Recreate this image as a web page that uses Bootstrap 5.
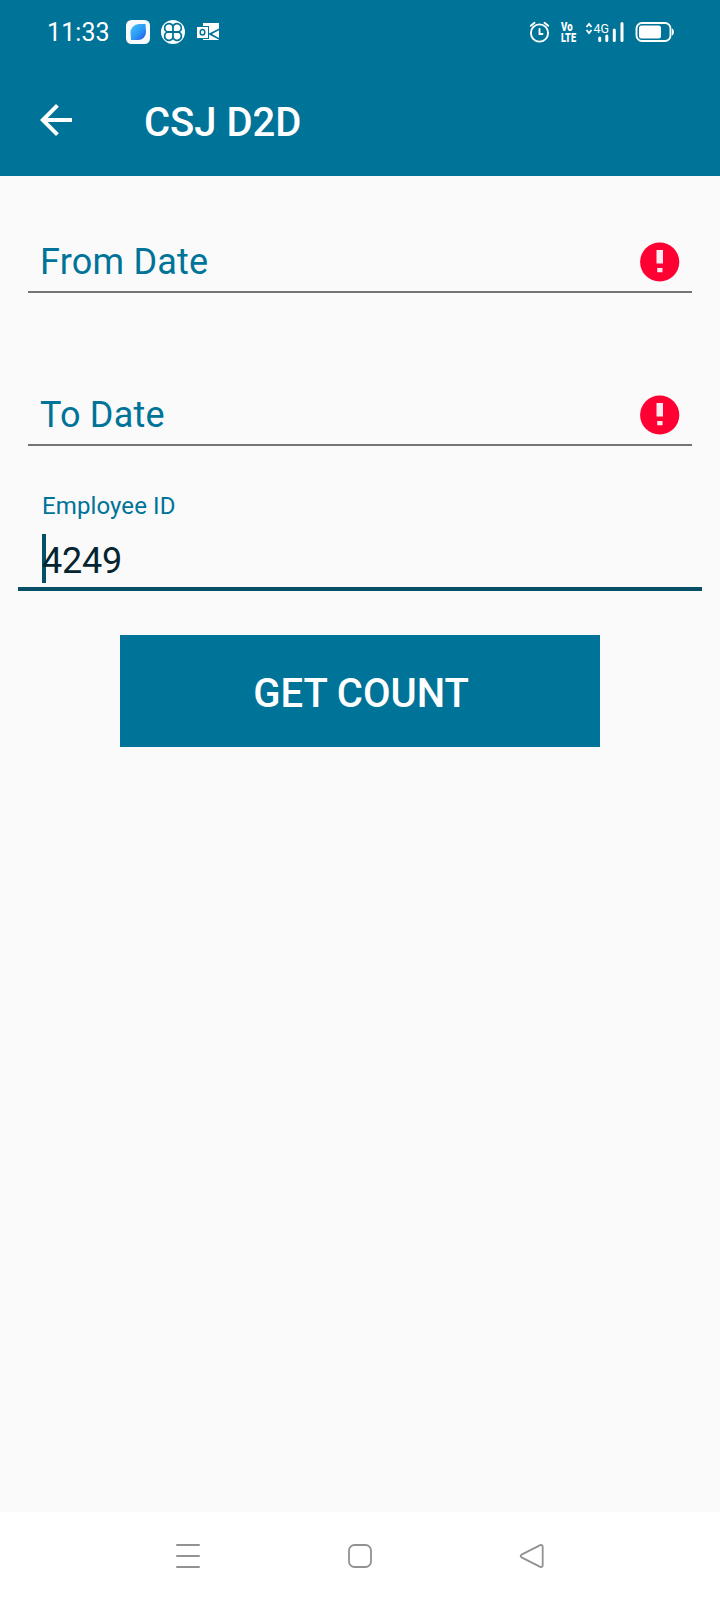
<!DOCTYPE html>
<html lang="en">
<head>
<meta charset="utf-8">
<meta name="viewport" content="width=device-width, initial-scale=1">
<title>CSJ D2D</title>
<link href="https://cdn.jsdelivr.net/npm/bootstrap@5.3.0/dist/css/bootstrap.min.css" rel="stylesheet">
<style>
  body { font-family: Roboto, "Liberation Sans", sans-serif; background: #fafafa; height: 1600px; overflow: hidden; }
  svg { display: block; flex: none; }
  .brand-bg { background: #007399; color: #fff; }
  .statusbar { height: 64px; padding: 0 45px 0 47px; }
  .clock { font-size: 25px; line-height: 28px; letter-spacing: .1px; width: 78px; padding-top: 1px; }
  .appbar { height: 112px; padding: 0 32px; gap: 64px; }
  .appbar h1 { font-size: 40px; line-height: 48px; font-weight: 500; padding-top: 5px; }
  .content { padding-top: 57px; }
  .date-field { height: 60px; margin: 0 28px; padding: 0 12px; border-bottom: 2px solid #757575; color: #007399; font-size: 36px; line-height: 58px; letter-spacing: .22px; }
  .date-field + .date-field { margin-top: 93px; }
  .employee { margin: 46px 18px 0; padding: 0 24px; border-bottom: 4px solid #055066; }
  .employee label { font-size: 24px; line-height: 28px; letter-spacing: .1px; color: #007399; }
  .entry { height: 53px; margin-top: 14px; font-size: 36px; line-height: 55px; letter-spacing: -.25px; color: #042530; }
  .caret { left: 0; top: 0; width: 4px; height: 49px; background: #055066; }
  .count-btn { width: 480px; height: 112px; margin-top: 44px; font-size: 40px; font-weight: 500; line-height: 48px; padding: 5px 0 0 2px; --bs-btn-color: #fff; --bs-btn-hover-color: #fff; }
  .count-btn:hover { background: #00668a; }
  .navkeys { height: 88px; padding: 0 175px; }
</style>
</head>
<body class="d-flex flex-column">
<header class="brand-bg">
  <div class="statusbar d-flex align-items-center justify-content-between">
    <div class="d-flex align-items-center">
      <span class="clock">11:33</span>
      <svg width="98" height="26" viewBox="125 19 98 26">
        <defs><linearGradient id="leaf" x1="0" y1="0" x2="1" y2="1"><stop offset="0" stop-color="#45c5f7"/><stop offset=".55" stop-color="#2a98f5"/><stop offset="1" stop-color="#2450e8"/></linearGradient></defs>
        <rect x="126" y="20" width="24" height="24" rx="5.500" fill="#f8fafc"/>
        <path d="M145.500 24l.5 8a7.800 7.800 0 0 1-8 8H131l-.5-7a8.500 8.500 0 0 1 8.500-9z" fill="url(#leaf)"/>
        <circle cx="173" cy="32" r="12" fill="#fff"/>
        <g transform="translate(173 32) scale(1.18) translate(-173 -32)"><path d="M173 32h-4.800a3.700 3.700 0 1 1 4.800-4.800zM173 32h4.800a3.700 3.700 0 1 0-4.800-4.800zM173 32h-4.800a3.700 3.700 0 1 0 4.800 4.800zM173 32h4.800a3.700 3.700 0 1 1-4.800 4.800z" fill="none" stroke="#007399" stroke-width="1.500"/></g>
        <path d="M203 23h16v17h-16z" fill="#fff"/>
        <path d="M208 34l11-5.500v1.700L212 34l7 4v1.700z" fill="#007399"/>
        <path d="M196.500 26h12.500v13h-12.500z" fill="#007399"/>
        <path d="M197 27h11v11h-11z" fill="#fff"/>
        <ellipse cx="202.500" cy="32.300" rx="2.300" ry="2.800" fill="none" stroke="#007399" stroke-width="1.500"/>
      </svg>
    </div>
    <svg width="147" height="28" viewBox="528 18 147 28">
      <g fill="none" stroke="#fff" stroke-width="1.900" stroke-linecap="round">
        <circle cx="539.500" cy="33" r="8.600"/><path d="M539.500 29v5h3M530.800 25.800l3.700-3M548.200 25.800l-3.700-3"/>
      </g>
      <text fill="#fff" font-family="Roboto, sans-serif" font-weight="900" font-size="12.500" transform="translate(561 0) scale(.74 1)"><tspan x="0" y="31.500" font-size="13">Vo</tspan><tspan x="0" y="42.200">LTE</tspan></text>
      <path d="M586.500 27l2.500-3 2.500 3M586.500 30l2.500 3 2.500-3" fill="none" stroke="#fff" stroke-width="1.800"/>
      <text x="593.500" y="32.500" font-size="13.500" fill="#fff" font-family="Roboto, sans-serif" textLength="15.500" lengthAdjust="spacingAndGlyphs">4G</text>
      <g stroke="#fff" stroke-width="3" stroke-linecap="round"><path d="M599.700 38v2.500M606.800 36v4.500M614.300 30v10.500M622 23.500v17"/></g>
      <rect x="636.500" y="23" width="34" height="18" rx="5.500" fill="none" stroke="#fff" stroke-width="1.900"/>
      <rect x="639" y="25.500" width="22" height="13" rx="2.500" fill="#fff"/>
      <path d="M672 28.500c2.500.8 2.500 6.200 0 7z" fill="#fff"/>
    </svg>
  </div>
  <div class="appbar d-flex align-items-center">
    <svg width="48" height="48" viewBox="0 0 24 24" fill="#fff"><path d="M20 11H7.830l5.590-5.590L12 4l-8 8 8 8 1.410-1.410L7.830 13H20v-2z"/></svg>
    <h1 class="m-0">CSJ D2D</h1>
  </div>
</header>
<main class="content flex-grow-1 d-flex flex-column">
  <div class="date-field d-flex align-items-center justify-content-between">
    <span>From Date</span>
    <svg width="40" height="40" viewBox="0 0 40 40"><circle cx="19.700" cy="20" r="19.600" fill="#ff0033"/><path d="M16.500 8h6.500v13.500h-6.500zM17.200 26h5.300v4.300h-5.300z" fill="#ffe9f0"/></svg>
  </div>
  <div class="date-field d-flex align-items-center justify-content-between">
    <span>To Date</span>
    <svg width="40" height="40" viewBox="0 0 40 40"><circle cx="19.700" cy="20" r="19.600" fill="#ff0033"/><path d="M16.500 8h6.500v13.500h-6.500zM17.200 26h5.300v4.300h-5.300z" fill="#ffe9f0"/></svg>
  </div>
  <div class="employee d-flex flex-column">
    <label>Employee ID</label>
    <div class="entry position-relative"><span class="caret position-absolute"></span><span class="position-relative">4249</span></div>
  </div>
  <button type="button" class="btn brand-bg count-btn rounded-0 border-0 align-self-center">GET COUNT</button>
</main>
<nav class="navkeys bg-white d-flex align-items-center justify-content-between">
  <svg width="26" height="26" viewBox="0 0 26 26" stroke="#929292" stroke-width="2" stroke-linecap="round"><path d="M2 2h22M2 13h22M2 24h22"/></svg>
  <svg width="26" height="26" viewBox="0 0 26 26" fill="none" stroke="#929292" stroke-width="1.800"><rect x="2" y="2" width="22" height="22" rx="5.500"/></svg>
  <svg width="26" height="26" viewBox="0 0 26 26" fill="none" stroke="#929292" stroke-width="1.800" stroke-linejoin="round"><path d="M2.500 11.600L21.200 2.100Q23.700 1.500 23.700 4v18q0 2.500-2.500 1.900L2.500 14.400Q.8 13 2.500 11.600z"/></svg>
</nav>
<script src="https://cdn.jsdelivr.net/npm/bootstrap@5.3.0/dist/js/bootstrap.bundle.min.js"></script>
</body>
</html>
